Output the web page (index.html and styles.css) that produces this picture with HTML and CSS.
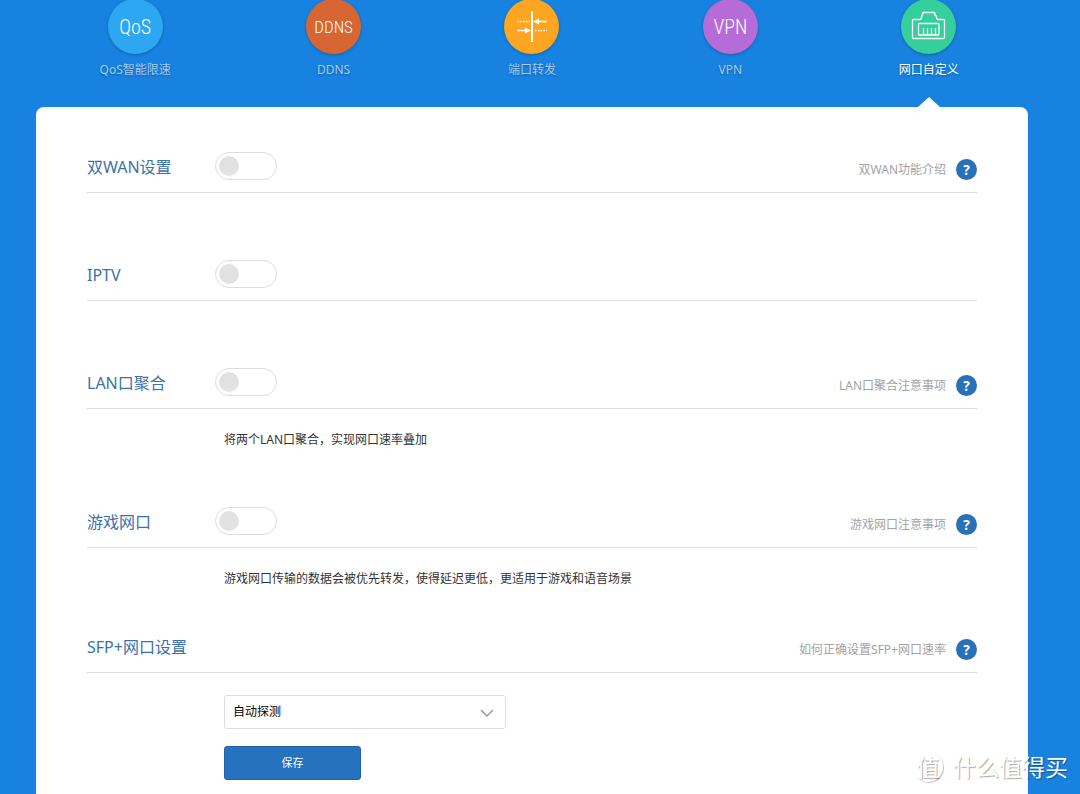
FILE: index.html
```html
<!DOCTYPE html>
<html lang="zh-CN">
<head>
<meta charset="utf-8">
<meta name="viewport" content="width=device-width, initial-scale=1">
<title>网口自定义</title>
<link rel="stylesheet" href="styles.css">
</head>
<body>
<div class="page">
  <nav class="tabs">
    <a class="tab" href="#qos">
      <span class="badge badge-qos">QoS</span>
      <span class="tab-label">QoS智能限速</span>
    </a>
    <a class="tab" href="#ddns">
      <span class="badge badge-ddns">DDNS</span>
      <span class="tab-label">DDNS</span>
    </a>
    <a class="tab" href="#forward">
      <span class="badge badge-forward">
        <svg class="badge-icon" viewBox="0 0 55 55" aria-hidden="true">
          <path d="M28 12.500V43" stroke="#fff" stroke-width="2"/>
          <path d="M13.500 31.500H24M32 22.500H42.500" stroke="#fff" stroke-width="1.600"/>
          <path d="M27 31.500L21 28.500V34.500ZM29 22.500L35 19.500V25.500Z" fill="#fff"/>
          <path d="M13.500 22.500H26M31 31.500H43" stroke="#fff" stroke-width="1.400" stroke-dasharray="1.500 1.300"/>
        </svg>
      </span>
      <span class="tab-label">端口转发</span>
    </a>
    <a class="tab" href="#vpn">
      <span class="badge badge-vpn">VPN</span>
      <span class="tab-label">VPN</span>
    </a>
    <a class="tab tab-active" href="#ports" aria-current="page">
      <span class="badge badge-ports">
        <svg class="badge-icon" viewBox="0 0 55 55" fill="none" stroke="#fff" stroke-width="1.300" stroke-linejoin="round" aria-hidden="true">
          <path d="M12.500 20.500H18.500Q20.500 20.500 20.500 18.500V17.500Q20.500 16.500 21.500 16.500V14.500Q21.500 13.500 22.500 13.500H33Q34 13.500 34 14.500V16.500Q35.500 16.500 35.500 17.500V18.500Q35.500 20.500 37.500 20.500H42.500Q43.500 20.500 43.500 21.500V38.500Q43.500 39.500 42.500 39.500H12.500Q11.500 39.500 11.500 38.500V21.500Q11.500 20.500 12.500 20.500Z"/>
          <rect x="17.500" y="24.500" width="20.500" height="11.500" rx="1"/>
          <path d="M22.500 29V36M26.500 29V36M30.500 29V36M34.500 29V36"/>
        </svg>
      </span>
      <span class="tab-label">网口自定义</span>
    </a>
  </nav>

  <main class="card">
    <section class="group">
      <header class="group-head">
        <h2 class="group-title"><label for="dual-wan">双WAN设置</label></h2>
        <input class="switch" type="checkbox" role="switch" id="dual-wan">
        <a class="help" href="#help-wan">双WAN功能介绍<span class="help-mark">?</span></a>
      </header>
    </section>
    <section class="group">
      <header class="group-head">
        <h2 class="group-title"><label for="iptv">IPTV</label></h2>
        <input class="switch" type="checkbox" role="switch" id="iptv">
      </header>
    </section>
    <section class="group">
      <header class="group-head">
        <h2 class="group-title"><label for="lan">LAN口聚合</label></h2>
        <input class="switch" type="checkbox" role="switch" id="lan">
        <a class="help" href="#help-lan">LAN口聚合注意事项<span class="help-mark">?</span></a>
      </header>
      <p class="group-text">将两个LAN口聚合，实现网口速率叠加</p>
    </section>
    <section class="group group-tight">
      <header class="group-head">
        <h2 class="group-title"><label for="game">游戏网口</label></h2>
        <input class="switch" type="checkbox" role="switch" id="game">
        <a class="help" href="#help-game">游戏网口注意事项<span class="help-mark">?</span></a>
      </header>
      <p class="group-text">游戏网口传输的数据会被优先转发，使得延迟更低，更适用于游戏和语音场景</p>
    </section>
    <section class="group">
      <header class="group-head">
        <h2 class="group-title"><label for="sfp">SFP+网口设置</label></h2>
        <a class="help" href="#help-sfp">如何正确设置SFP+网口速率<span class="help-mark">?</span></a>
      </header>
      <form class="group-form">
        <div class="select-box">
          <select class="select" id="sfp">
            <option>自动探测</option>
          </select>
          <svg class="select-arrow" viewBox="0 0 14 8" fill="none" stroke="#999" stroke-width="1.500" aria-hidden="true"><path d="M1 1L7 7L13 1"/></svg>
        </div>
        <button class="save" type="button">保存</button>
      </form>
    </section>
  </main>

  <div class="watermark">
    <span class="watermark-seal">值</span>
    <span>什么值得买</span>
  </div>
</div>
</body>
</html>
```

FILE: styles.css
```css
* {
  box-sizing: border-box;
}

body {
  margin: 0;
  background: #1782df;
  color: #333;
  font-family: "Noto Sans", "Noto Sans CJK SC", sans-serif;
  font-size: 12px;
  line-height: 18px;
}

a {
  color: inherit;
  text-decoration: none;
}

.page {
  position: relative;
  display: flex;
  flex-direction: column;
  min-height: 100vh;
  padding: 0 52px 0 36px;
  overflow: hidden;
}

.tabs {
  display: grid;
  grid-template-columns: repeat(5, 1fr);
  margin-top: -1px;
}

.tab {
  position: relative;
  display: flex;
  flex-direction: column;
  align-items: center;
  gap: 7px;
  height: 108px;
  color: #a5cdf2;
  text-shadow: 0 1px 2px rgba(0, 0, 0, 0.3);
}

.tab-active {
  color: #fff;
}

.tab-active::after {
  content: "";
  position: absolute;
  bottom: 0;
  left: 50%;
  margin-left: -11px;
  border: 11px solid transparent;
  border-top: 0;
  border-bottom: 10px solid #fff;
}

.badge {
  display: flex;
  align-items: center;
  justify-content: center;
  width: 55px;
  height: 55px;
  border-radius: 50%;
  color: #fff;
  font-family: "Roboto Condensed", "Liberation Sans Narrow", Roboto, sans-serif;
  font-size: 20px;
  font-weight: 300;
  text-shadow: none;
  box-shadow: 0 1px 3px rgba(0, 0, 0, 0.25);
}

.badge-icon {
  width: 55px;
  height: 55px;
}

.badge-qos {
  background: #2ea7f2;
}

.badge-ddns {
  background: #d86633;
  font-size: 17px;
}

.badge-forward {
  background: #fea621;
}

.badge-vpn {
  background: #b56bd8;
}

.badge-ports {
  background: #34cf9a;
}

.card {
  flex: 1;
  padding: 45px 51px 14px;
  border-radius: 8px 8px 0 0;
  background: #fff;
}

.group {
  min-height: 108px;
}

.group-head {
  display: flex;
  align-items: flex-start;
  height: 41px;
  border-bottom: 1px solid #ddd;
}

.group-title {
  min-width: 128px;
  margin: 0;
  color: #3b72a8;
  font-size: 16px;
  font-weight: 400;
  line-height: 30px;
}

.switch {
  appearance: none;
  width: 62px;
  height: 28px;
  margin: 0;
  padding: 3px;
  border: 1px solid #ddd;
  border-radius: 14px;
  background: #fff;
}

.switch::before {
  content: "";
  display: block;
  width: 20px;
  height: 20px;
  border-radius: 50%;
  background: #e2e2e2;
}

.switch:checked::before {
  margin-left: auto;
  background: #2672bf;
}

.help {
  display: flex;
  align-items: center;
  gap: 10px;
  height: 35px;
  margin-left: auto;
  color: #a3a3a3;
}

.help-mark {
  width: 21px;
  height: 21px;
  border-radius: 50%;
  background: #2870b8;
  color: #fff;
  font-family: "Open Sans", sans-serif;
  font-size: 14px;
  font-weight: 700;
  line-height: 21px;
  text-align: center;
}

.group-text {
  margin: 0;
  padding: 22px 0 58px 137px;
}

.group-tight .group-text {
  padding-bottom: 44px;
}

.group-form {
  display: flex;
  flex-direction: column;
  align-items: flex-start;
  gap: 17px;
  padding: 22px 0 0 137px;
}

.select-box {
  position: relative;
  width: 282px;
}

.select {
  appearance: none;
  display: block;
  width: 100%;
  height: 34px;
  padding: 0 32px 0 8px;
  border: 1px solid #ddd;
  border-radius: 3px;
  background: #fff;
  color: #000;
  font: inherit;
}

.select-arrow {
  position: absolute;
  top: 14px;
  right: 12px;
  width: 14px;
  height: 8px;
  pointer-events: none;
}

.save {
  width: 137px;
  height: 34px;
  border: 1px solid #1e63ab;
  border-radius: 3px;
  background: #2672bf;
  color: #fff;
  font: inherit;
  font-size: 11px;
}

.watermark {
  position: absolute;
  right: 12px;
  bottom: 12px;
  display: flex;
  align-items: center;
  gap: 10px;
  color: #fff;
  font-size: 23px;
  line-height: 30px;
  text-shadow: 1px 1px 1px rgba(0, 0, 0, 0.35);
  pointer-events: none;
}

.watermark-seal {
  width: 30px;
  height: 30px;
  border: 1px solid #fff;
  border-radius: 50%;
  box-shadow: 1px 1px 1px rgba(0, 0, 0, 0.25);
  line-height: 28px;
  text-align: center;
}
```
